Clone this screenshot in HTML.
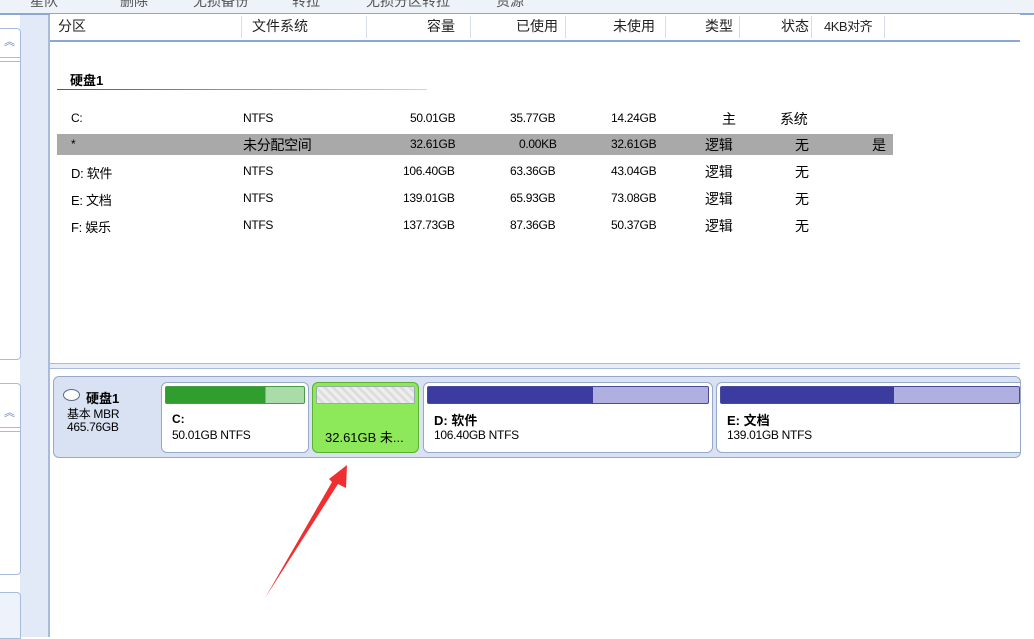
<!DOCTYPE html>
<html><head><meta charset="utf-8"><style>
body{margin:0;width:1034px;height:637px;position:relative;overflow:hidden;background:#fff;font-family:"Liberation Sans","Noto Sans CJK SC",sans-serif;font-size:12px;color:#000}
.a{position:absolute}
.hd{position:absolute;top:16px;font-size:14px;color:#222}
.sep{position:absolute;top:16px;width:1px;height:22px;background:#d6dde8}
.r{position:absolute;font-size:12px;letter-spacing:-0.3px}
.blk{position:absolute;top:382px;height:69px;border:1px solid #98a8c8;border-radius:6px;background:#fff;overflow:hidden}
.bar{position:absolute;left:3px;right:3px;top:3px;height:16px;border:1px solid #7080a0;border-radius:2px}
.tb{position:absolute;top:-9px;font-size:14px;color:#555;white-space:nowrap}
</style></head><body>
<div class="a" style="left:0;top:0;width:1034px;height:13px;background:#eef2f9;border-bottom:2px solid #8ba7d4;overflow:hidden">
<div class="tb" style="left:30px">星队</div><div class="tb" style="left:120px">删除</div><div class="tb" style="left:193px">无损备份</div><div class="tb" style="left:292px">转拉</div><div class="tb" style="left:366px">无损分区转拉</div><div class="tb" style="left:496px">资源</div>
</div>
<!-- left sidebar -->
<div class="a" style="left:20px;top:15px;width:28px;height:622px;background:#e3eaf7;border-right:2px solid #a8bbdc"></div>
<div class="a" style="left:0;top:28px;width:20px;height:330px;border:1px solid #a8bbdc;border-left:none;border-radius:0 4px 4px 0;background:#fff"></div>
<div class="a" style="left:4px;top:33px;color:#5a7ab0;font-size:11px">︽</div>
<div class="a" style="left:0;top:57px;width:20px;height:3px;border-top:1px solid #a8bbdc;border-bottom:1px solid #a8bbdc"></div>
<div class="a" style="left:0;top:383px;width:20px;height:190px;border:1px solid #a8bbdc;border-left:none;border-radius:0 4px 4px 0;background:#fff"></div>
<div class="a" style="left:4px;top:404px;color:#5a7ab0;font-size:11px">︽</div>
<div class="a" style="left:0;top:427px;width:20px;height:3px;border-top:1px solid #a8bbdc;border-bottom:1px solid #a8bbdc"></div>
<div class="a" style="left:0;top:592px;width:20px;height:45px;border:1px solid #a8bbdc;border-left:none;border-radius:0 4px 0 0;background:#eef3fb"></div>
<!-- header -->
<div class="a" style="left:50px;top:14px;width:970px;height:26px;background:#fff;border-bottom:2px solid #8ba7d4"></div>
<div class="hd" style="left:58px">分区</div>
<div class="sep" style="left:241px"></div><div class="hd" style="left:252px">文件系统</div>
<div class="sep" style="left:366px"></div><div class="hd" style="left:427px">容量</div>
<div class="sep" style="left:470px"></div><div class="hd" style="left:516px">已使用</div>
<div class="sep" style="left:565px"></div><div class="hd" style="left:613px">未使用</div>
<div class="sep" style="left:665px"></div><div class="hd" style="left:705px">类型</div>
<div class="sep" style="left:739px"></div><div class="hd" style="left:781px">状态</div>
<div class="sep" style="left:811px"></div><div class="hd" style="left:824px;font-size:13px;letter-spacing:-0.5px">4KB对齐</div>
<div class="sep" style="left:884px"></div>
<div class="a" style="left:70px;top:70px;font-weight:bold;font-size:13px">硬盘1</div>
<div class="a" style="left:57px;top:89px;width:370px;height:1px;background:linear-gradient(90deg,#3a5f8a,#c8d4e4)"></div>
<div class="a" style="left:57px;top:134px;width:836px;height:21px;background:#a9a9a9"></div>
<!-- rows -->
<div class="r" style="left:71px;top:111px">C:</div><div class="r" style="left:243px;top:111px">NTFS</div><div class="r" style="left:410px;top:111px">50.01GB</div><div class="r" style="left:510px;top:111px">35.77GB</div><div class="r" style="left:611px;top:111px">14.24GB</div><div class="r" style="left:722px;top:109px;font-size:14px">主</div><div class="r" style="left:780px;top:109px;font-size:14px">系统</div>
<div class="r" style="left:71px;top:137px">*</div><div class="r" style="left:243px;top:135px;font-size:14px">未分配空间</div><div class="r" style="left:410px;top:137px">32.61GB</div><div class="r" style="left:519px;top:137px">0.00KB</div><div class="r" style="left:611px;top:137px">32.61GB</div><div class="r" style="left:705px;top:135px;font-size:14px">逻辑</div><div class="r" style="left:795px;top:135px;font-size:14px">无</div><div class="r" style="left:872px;top:135px;font-size:14px">是</div>
<div class="r" style="left:71px;top:163px;font-size:13px">D: 软件</div><div class="r" style="left:243px;top:164px">NTFS</div><div class="r" style="left:403px;top:164px">106.40GB</div><div class="r" style="left:510px;top:164px">63.36GB</div><div class="r" style="left:611px;top:164px">43.04GB</div><div class="r" style="left:705px;top:162px;font-size:14px">逻辑</div><div class="r" style="left:795px;top:162px;font-size:14px">无</div>
<div class="r" style="left:71px;top:190px;font-size:13px">E: 文档</div><div class="r" style="left:243px;top:191px">NTFS</div><div class="r" style="left:403px;top:191px">139.01GB</div><div class="r" style="left:510px;top:191px">65.93GB</div><div class="r" style="left:611px;top:191px">73.08GB</div><div class="r" style="left:705px;top:189px;font-size:14px">逻辑</div><div class="r" style="left:795px;top:189px;font-size:14px">无</div>
<div class="r" style="left:71px;top:217px;font-size:13px">F: 娱乐</div><div class="r" style="left:243px;top:218px">NTFS</div><div class="r" style="left:403px;top:218px">137.73GB</div><div class="r" style="left:510px;top:218px">87.36GB</div><div class="r" style="left:611px;top:218px">50.37GB</div><div class="r" style="left:705px;top:216px;font-size:14px">逻辑</div><div class="r" style="left:795px;top:216px;font-size:14px">无</div>
<!-- splitter -->
<div class="a" style="left:50px;top:363px;width:970px;height:4px;border-top:1px solid #a8bbdc;border-bottom:1px solid #a8bbdc;background:#e8eef8"></div>
<!-- disk map -->
<div class="a" style="left:53px;top:376px;width:966px;height:80px;border:1px solid #98a8c8;border-radius:6px;background:#d9e2f3"></div>
<div class="a" style="left:63px;top:389px;width:15px;height:10px;border:1px solid #5a6a88;border-radius:50%;background:#fff"></div>
<div class="a" style="left:86px;top:388px;font-weight:bold;font-size:13px">硬盘1</div>
<div class="a" style="left:67px;top:405px;font-size:12px;letter-spacing:-0.3px">基本 MBR</div>
<div class="a" style="left:67px;top:420px;font-size:12px;letter-spacing:-0.3px">465.76GB</div>
<div class="blk" style="left:161px;width:146px"><div class="bar" style="border-color:#4a9a4a;background:linear-gradient(90deg,#2f9e2f 0 72%,#a9dca9 72%)"></div>
<div class="a" style="left:10px;top:29px;font-weight:bold">C:</div><div class="a" style="left:10px;top:45px;letter-spacing:-0.3px">50.01GB NTFS</div></div>
<div class="blk" style="left:312px;width:105px;background:#8de85a;border-color:#5ab030"><div class="bar" style="border-color:#9aa;background:repeating-linear-gradient(45deg,#eee 0 3px,#ddd 3px 6px)"></div>
<div class="a" style="left:12px;top:44px;font-size:13px;white-space:nowrap">32.61GB 未...</div></div>
<div class="blk" style="left:423px;width:288px"><div class="bar" style="border-color:#4a4a9a;background:linear-gradient(90deg,#3c3ca0 0 59%,#b0b0e0 59%)"></div>
<div class="a" style="left:10px;top:27px;font-weight:bold;font-size:13px">D: 软件</div><div class="a" style="left:10px;top:45px;letter-spacing:-0.3px">106.40GB NTFS</div></div>
<div class="blk" style="left:716px;width:303px;border-right:none;border-radius:6px 0 0 6px"><div class="bar" style="border-color:#4a4a9a;background:linear-gradient(90deg,#3c3ca0 0 58%,#b0b0e0 58%);right:0"></div>
<div class="a" style="left:10px;top:27px;font-weight:bold;font-size:13px">E: 文档</div><div class="a" style="left:10px;top:45px;letter-spacing:-0.3px">139.01GB NTFS</div></div>
<!-- arrow -->
<svg class="a" style="left:0;top:0" width="1034" height="637"><path d="M265 598 L332 482 L329 479 L347 465 L346 488 L338 484 Z" fill="#f03030"/></svg>
</body></html>
